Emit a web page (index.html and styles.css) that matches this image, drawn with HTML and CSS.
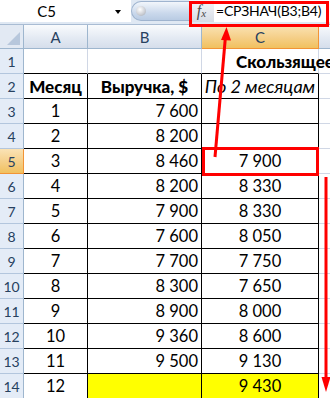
FILE: index.html
```html
<!DOCTYPE html>
<html>
<head>
<meta charset="utf-8">
<link rel="stylesheet" href="styles.css">
</head>
<body>
<div class="page">
  <div class="topbar">
    <div class="namebox"><span class="name">C5</span><span class="dd"></span></div>
    <div class="knob"><span class="dot"></span></div>
    <div class="fx"><span class="fx-f">f</span><span class="fx-x">x</span></div>
    <div class="formula">=СРЗНАЧ(B3;B4)</div>
  </div>
  <div class="sheet">
    <div class="corner"></div><div class="ch">A</div><div class="ch">B</div><div class="ch ch-sel">C</div><div class="ch ch-last"></div>

    <div class="rh">1</div><div class="c top"></div><div class="c top"></div><div class="c top"><span class="title">Скользящее среднее</span></div><div class="c d"></div>

    <div class="rh">2</div><div class="c t ctr b">Месяц</div><div class="c t ctr b">Выручка, $</div><div class="c t ctr it">По 2 месяцам</div><div class="c d"></div>

    <div class="rh">3</div><div class="c t ctr">1</div><div class="c t r">7 600</div><div class="c t ctr"></div><div class="c d"></div>
    <div class="rh">4</div><div class="c t ctr">2</div><div class="c t r">8 200</div><div class="c t ctr"></div><div class="c d"></div>
    <div class="rh rh-sel">5</div><div class="c t ctr">3</div><div class="c t r">8 460</div><div class="c t ctr">7 900</div><div class="c d"></div>
    <div class="rh">6</div><div class="c t ctr">4</div><div class="c t r">8 200</div><div class="c t ctr">8 330</div><div class="c d"></div>
    <div class="rh">7</div><div class="c t ctr">5</div><div class="c t r">7 900</div><div class="c t ctr">8 330</div><div class="c d"></div>
    <div class="rh">8</div><div class="c t ctr">6</div><div class="c t r">7 600</div><div class="c t ctr">8 050</div><div class="c d"></div>
    <div class="rh">9</div><div class="c t ctr">7</div><div class="c t r">7 700</div><div class="c t ctr">7 750</div><div class="c d"></div>
    <div class="rh">10</div><div class="c t ctr">8</div><div class="c t r">8 300</div><div class="c t ctr">7 650</div><div class="c d"></div>
    <div class="rh">11</div><div class="c t ctr">9</div><div class="c t r">8 900</div><div class="c t ctr">8 000</div><div class="c d"></div>
    <div class="rh">12</div><div class="c t ctr">10</div><div class="c t r">9 360</div><div class="c t ctr">8 600</div><div class="c d"></div>
    <div class="rh">13</div><div class="c t ctr">11</div><div class="c t r">9 500</div><div class="c t ctr">9 130</div><div class="c d"></div>
    <div class="rh">14</div><div class="c t ctr">12</div><div class="c t r y"></div><div class="c t ctr y">9 430</div><div class="c d"></div>
  </div>

  <div class="fbox"></div>
  <div class="selbox"></div>
  <svg class="arrows" width="330" height="398" viewBox="0 0 330 398">
    <line x1="215" y1="157" x2="225.5" y2="36" stroke="#ff0000" stroke-width="3"/>
    <polygon points="226.5,27 221,40 231,40.5" fill="#ff0000"/>
    <line x1="326" y1="177" x2="326" y2="380" stroke="#ff0000" stroke-width="3"/>
    <polygon points="326,392 321.5,377 330.5,377" fill="#ff0000"/>
  </svg>
</div>
</body>
</html>
```
FILE: styles.css
```css
html, body {
  margin: 0;
  padding: 0;
  background: #fff;
}
.page {
  position: relative;
  width: 330px;
  height: 398px;
  overflow: hidden;
  font-family: Lato, "Open Sans", sans-serif;
  color: #000;
}
.topbar {
  display: flex;
  height: 25px;
  box-sizing: border-box;
  background: #dfe8f3;
  border-bottom: 1px solid #a9bcd3;
}
.namebox {
  width: 131px;
  height: 22px;
  background: #fff;
  display: flex;
  align-items: center;
}
.name {
  flex: 1;
  text-align: center;
  font-size: 15px;
  padding-right: 22px;
}
.dd {
  width: 0;
  height: 0;
  border-left: 3.5px solid transparent;
  border-right: 3.5px solid transparent;
  border-top: 4px solid #000;
  margin-right: 10px;
  margin-top: 2px;
}
.knob {
  position: relative;
  width: 58px;
  height: 20px;
  margin-top: 1px;
  box-sizing: border-box;
  border: 1px solid #9fb4cf;
  border-right: none;
  border-radius: 10px 0 0 10px;
  background: linear-gradient(#f2f6fb, #cbd9ec 60%, #b9cbe3);
}
.dot {
  position: absolute;
  left: 4px;
  top: 4px;
  width: 10px;
  height: 10px;
  border-radius: 50%;
  background: radial-gradient(circle at 40% 35%, #ffffff, #c9ccd2 60%, #9ca3ad);
}
.fx {
  width: 25px;
  height: 22px;
  background: linear-gradient(#f5f7fa, #d6dce5);
  display: flex;
  align-items: center;
  justify-content: center;
  font-family: "Liberation Serif", serif;
  font-style: italic;
  color: #4a4a4a;
}
.fx-f {
  font-size: 16px;
}
.fx-x {
  font-size: 11px;
  margin-top: 4px;
}
.formula {
  flex: 1;
  height: 22px;
  background: #fff;
  font-size: 14px;
  letter-spacing: -0.2px;
  line-height: 22px;
  padding-left: 2px;
  white-space: nowrap;
}
.sheet {
  display: grid;
  grid-template-columns: 24px 64px 114px 117px 11px;
  grid-template-rows: 24px repeat(14, 25px);
}
.sheet > div {
  box-sizing: border-box;
}
.corner {
  position: relative;
  background: #e2e9f3;
  border-right: 1px solid #9eb6ce;
  border-bottom: 1px solid #9eb6ce;
}
.corner::after {
  content: "";
  position: absolute;
  right: 3px;
  bottom: 3px;
  width: 0;
  height: 0;
  border-left: 13px solid transparent;
  border-bottom: 13px solid #b7c7dc;
}
.ch {
  background: linear-gradient(#f9fbfd, #e4eaf3 55%, #d5deeb);
  border-right: 1px solid #9eb6ce;
  border-bottom: 1px solid #9eb6ce;
  color: #27415f;
  font-size: 15px;
  display: flex;
  align-items: center;
  justify-content: center;
}
.ch-sel {
  background: linear-gradient(#fae3b6, #f5cf88 55%, #f1c15f);
  border-right-color: #f29436;
  border-bottom-color: #f29436;
}
.ch-last {
  border-right: none;
}
.rh {
  background: #e4ecf7;
  border-right: 1px solid #9eb6ce;
  border-bottom: 1px solid #b3c6dd;
  color: #27415f;
  font-size: 14px;
  display: flex;
  align-items: center;
  justify-content: center;
}
.rh-sel {
  background: linear-gradient(#fae3b6, #f5cf88 55%, #f1c15f);
  border-right-color: #f29436;
  border-bottom-color: #f29436;
}
.c {
  border-right: 1px solid #d0d7e5;
  border-bottom: 1px solid #d0d7e5;
  font-size: 16.5px;
  display: flex;
  align-items: center;
  white-space: nowrap;
}
.top {
  border-bottom-color: #000;
}
.t {
  border-right-color: #000;
  border-bottom-color: #000;
}
.d {
  border-right: none;
}
.ctr {
  justify-content: center;
}
.r {
  justify-content: flex-end;
  padding-right: 3px;
}
.b {
  font-weight: 900;
  font-size: 17px;
}
.it {
  font-style: italic;
  font-size: 18px;
}
.y {
  background: #ffff00;
}
.title {
  font-weight: 900;
  font-size: 17px;
  padding-left: 34px;
  position: relative;
  z-index: 1;
}
.fbox {
  position: absolute;
  left: 189px;
  top: 1px;
  width: 140px;
  height: 26px;
  box-sizing: border-box;
  border: 3px solid #ff0000;
}
.selbox {
  position: absolute;
  left: 202px;
  top: 147px;
  width: 117px;
  height: 29px;
  box-sizing: border-box;
  border: 3px solid #ff0000;
}
.arrows {
  position: absolute;
  left: 0;
  top: 0;
}
```
